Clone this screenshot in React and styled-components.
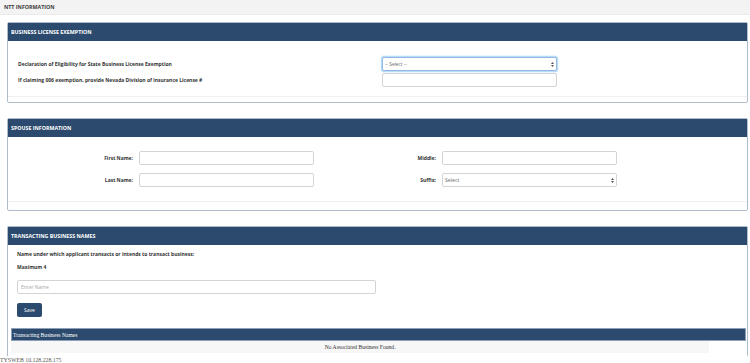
import React from "react";
import styled, { createGlobalStyle } from "styled-components";

const Global = createGlobalStyle`
  html, body { margin: 0; padding: 0; background: #ffffff; }
  body { font-family: "Open Sans", "Noto Sans", sans-serif; color: #333; overflow: hidden; }
  * { box-sizing: border-box; }
`;

const TopBar = styled.div`
  height: 15px;
  background: #f3f3f3;
  border-bottom: 1px solid #ebebeb;
  display: flex;
  align-items: center;
  padding-left: 4px;
  font-size: 5.3px;
  font-weight: 700;
  color: #3a3a3a;
`;

const Main = styled.div`
  padding: 7px 2px 0 7px;
  display: flex;
  flex-direction: column;
  gap: 15px;
`;

const Panel = styled.section`
  border: 1px solid #aebccc;
  border-radius: 2px;
  background: #fff;
  display: flex;
  flex-direction: column;
  ${(p) => (p.$open ? "border-bottom-color: transparent; height: 131px;" : "")}
`;

const PanelHeader = styled.div`
  height: 18px;
  flex: none;
  background: #2c4a6d;
  display: flex;
  align-items: center;
  padding-left: 3px;
  color: #fff;
  font-size: 5.3px;
  font-weight: 700;
`;

const PanelFooter = styled.div`
  height: ${(p) => p.$h}px;
  border-top: 1px solid #f1f1f1;
`;

const Label = styled.label`
  font-size: 5px;
  font-weight: 700;
  color: #333;
  display: flex;
  align-items: center;
  justify-content: ${(p) => (p.$right ? "flex-end" : "flex-start")};
`;

const ExemptGrid = styled.div`
  display: grid;
  grid-template-columns: 364px 175px;
  grid-auto-rows: 14px;
  row-gap: 2px;
  padding: 16px 0 9px 10px;
`;

const SpouseGrid = styled.div`
  display: grid;
  grid-template-columns: 125px 175px 116px 175px;
  grid-auto-rows: 14px;
  column-gap: 6px;
  row-gap: 8px;
  padding: 14px 0 14px 0;
`;

const Input = styled.input`
  display: block;
  width: ${(p) => p.$w || "100%"};
  height: 14px;
  border: 1px solid #d4d4d4;
  border-radius: 2px;
  background: #fff;
  font-family: "Open Sans", sans-serif;
  font-size: 5px;
  padding: 0 3px;
  color: #555;
  outline: none;
  &::placeholder { color: #aaa; }
`;

const SelectWrap = styled.div`
  position: relative;
  height: 14px;
`;

const Select = styled.select`
  display: block;
  width: 100%;
  height: 14px;
  appearance: none;
  border: 1px solid ${(p) => (p.$focus ? "#8fb9e6" : "#d4d4d4")};
  box-shadow: ${(p) => (p.$focus ? "0 0 1.5px 0.5px rgba(102,175,233,0.55)" : "none")};
  border-radius: 2px;
  background: #fff;
  font-family: "Open Sans", sans-serif;
  font-size: ${(p) => p.$fs}px;
  color: #666;
  padding: 0 2px;
  outline: none;
`;

const Arrows = styled.svg`
  position: absolute;
  right: 3px;
  top: 4.5px;
  width: 3px;
  height: 5px;
  pointer-events: none;
`;

const TbnBody = styled.div`
  display: flex;
  flex-direction: column;
  padding: 0 0 0 9px;
`;

const Text = styled.p`
  margin: 0;
  font-size: 5px;
  font-weight: 700;
  color: #333;
  height: ${(p) => p.$h}px;
  display: flex;
  align-items: center;
`;

const Spacer = styled.div`
  height: ${(p) => p.$h}px;
`;

const SaveButton = styled.button`
  width: 25px;
  height: 14px;
  margin-top: 9px;
  background: #2c4a6d;
  color: #fff;
  border: none;
  border-radius: 2px;
  font-family: "Open Sans", sans-serif;
  font-size: 5px;
  padding: 0;
`;

const Table = styled.div`
  margin: 11px 1px 0 3px;
  font-family: "Liberation Serif", "Times New Roman", serif;
  font-size: 5.6px;
`;

const TableCaption = styled.div`
  height: 13px;
  background: #2c4a6d;
  border: 0.5px solid #8da0b8;
  color: #fff;
  display: flex;
  align-items: center;
  padding-left: 1px;
`;

const TableRow = styled.div`
  width: 95%;
  height: 12px;
  background: #f7f7f7;
  color: #333;
  display: flex;
  align-items: center;
  justify-content: center;
`;

const ServerTag = styled.div`
  font-family: "Liberation Serif", serif;
  font-size: 5.8px;
  line-height: 7px;
  color: #555;
  margin-top: 0;
`;

function UpDown() {
  return (
    <Arrows viewBox="0 0 6 10">
      <path d="M3 0 L6 4 L0 4 Z" fill="#555" />
      <path d="M3 10 L6 6 L0 6 Z" fill="#555" />
    </Arrows>
  );
}

export default function App() {
  return (
    <>
      <Global />
      <TopBar>NTT INFORMATION</TopBar>
      <Main>
        <Panel>
          <PanelHeader>BUSINESS LICENSE EXEMPTION</PanelHeader>
          <ExemptGrid>
            <Label>Declaration of Eligibility for State Business License Exemption</Label>
            <SelectWrap>
              <Select $focus $fs={4.8}>
                <option>-- Select --</option>
              </Select>
              <UpDown />
            </SelectWrap>
            <Label>If claiming 006 exemption, provide Nevada Division of insurance License #</Label>
            <Input />
          </ExemptGrid>
          <PanelFooter $h={6} />
        </Panel>

        <Panel>
          <PanelHeader>SPOUSE INFORMATION</PanelHeader>
          <SpouseGrid>
            <Label $right>First Name:</Label>
            <Input />
            <Label $right>Middle:</Label>
            <Input />
            <Label $right>Last Name:</Label>
            <Input />
            <Label $right>Suffix:</Label>
            <SelectWrap>
              <Select $fs={5.2}>
                <option>Select</option>
              </Select>
              <UpDown />
            </SelectWrap>
          </SpouseGrid>
          <PanelFooter $h={9} />
        </Panel>

        <Panel $open>
          <PanelHeader>TRANSACTING BUSINESS NAMES</PanelHeader>
          <TbnBody>
            <Text $h={18}>Name under which applicant transacts or intends to transact business:</Text>
            <Text $h={8}>Maximum 4</Text>
            <Spacer $h={9} />
            <Input $w="359px" placeholder="Enter Name" />
            <SaveButton>Save</SaveButton>
          </TbnBody>
          <Table>
            <TableCaption>Transacting Business Names</TableCaption>
            <TableRow>No Associated Business Found.</TableRow>
          </Table>
        </Panel>
      </Main>
      <ServerTag>TYSWEB 10.128.228.175</ServerTag>
    </>
  );
}
